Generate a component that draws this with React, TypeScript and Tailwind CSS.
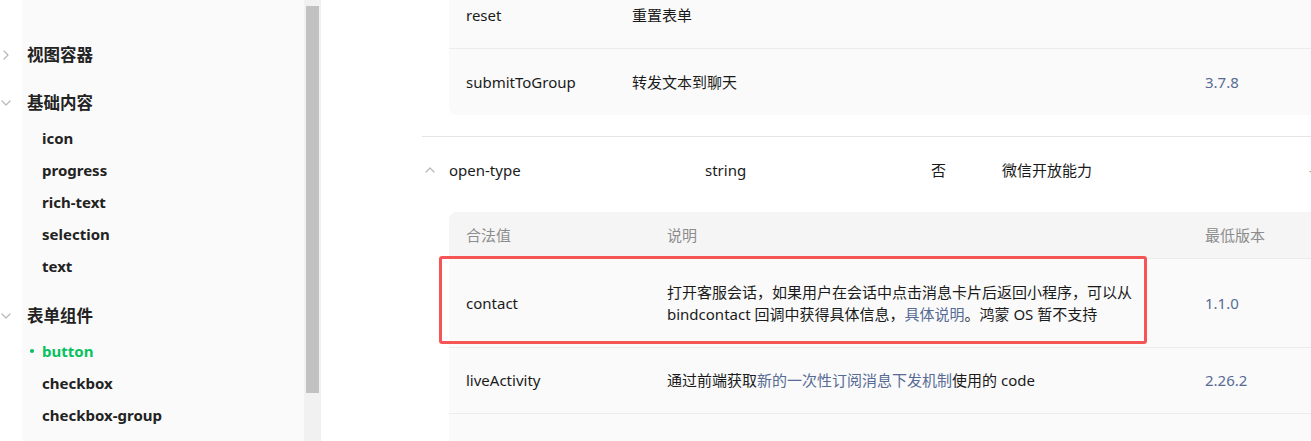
import type { ReactNode } from "react";

const FONT = { fontFamily: '"Noto Sans", "Noto Sans CJK SC", sans-serif' };

function Chevron({ dir }: { dir: "right" | "down" | "up" }) {
  const d =
    dir === "right" ? "M3 1l4 4-4 4" : dir === "down" ? "M1 3l4 4 4-4" : "M1 7l4-4 4 4";
  return (
    <svg width="10" height="10" viewBox="0 0 10 10" fill="none">
      <path d={d} stroke="#b8b8b8" strokeWidth="1.2" strokeLinecap="round" strokeLinejoin="round" />
    </svg>
  );
}

function Group({ title, open, children }: { title: string; open: boolean; children?: ReactNode }) {
  return (
    <div>
      <div className="flex h-[48px] items-center">
        <div className="flex w-[27px] items-center pl-[1px]">
          <Chevron dir={open ? "down" : "right"} />
        </div>
        <span className="text-[16.5px] font-bold text-[#222]">{title}</span>
      </div>
      {open && <div className="mt-[-5px] mb-[10px]">{children}</div>}
    </div>
  );
}

function Item({ label, active }: { label: string; active?: boolean }) {
  return (
    <div className="relative flex h-8 items-center pl-[42px]">
      {active && <span className="absolute left-[30px] h-[4px] w-[4px] rounded-full bg-[#07c160]" />}
      <span className={`text-[15px] font-bold ${active ? "text-[#07c160]" : "text-[#222]"}`}>{label}</span>
    </div>
  );
}

function Link({ children }: { children: ReactNode }) {
  return <span className="text-[#576b95]">{children}</span>;
}

export default function App() {
  return (
    <div className="flex h-[441px] w-[1311px] overflow-hidden bg-white" style={FONT}>
      {/* sidebar */}
      <aside className="w-[304px] shrink-0 bg-[linear-gradient(to_right,#ffffff_22px,#fafafa_22px)] pt-[31px]">
        <Group title="视图容器" open={false} />
        <Group title="基础内容" open>
          <Item label="icon" />
          <Item label="progress" />
          <Item label="rich-text" />
          <Item label="selection" />
          <Item label="text" />
        </Group>
        <Group title="表单组件" open>
          <Item label="button" active />
          <Item label="checkbox" />
          <Item label="checkbox-group" />
        </Group>
      </aside>

      {/* scrollbar */}
      <div className="w-[17px] shrink-0 bg-[#f1f1f1] px-[2px] pt-[6px]">
        <div className="h-[387px] bg-[#c1c1c1]" />
      </div>

      {/* content */}
      <main className="min-w-0 flex-1 overflow-hidden pl-[101px] text-[15px] text-[#1a1a1a]">
        {/* previous attribute's value table */}
        <div className="ml-[27px] mt-[-17px] w-[900px] rounded-b-lg bg-[#fafafa]">
          <div className="flex h-[66px] items-center border-b border-[#ececec] pl-[17px]">
            <span className="w-[166px]">reset</span>
            <span>重置表单</span>
          </div>
          <div className="flex h-[66px] items-center pl-[17px]">
            <span className="w-[166px]">submitToGroup</span>
            <span className="w-[573px]">转发文本到聊天</span>
            <span className="text-[#576b95]">3.7.8</span>
          </div>
        </div>

        {/* open-type attribute */}
        <div className="mt-[21px] w-[1000px] border-t border-[#e5e5e5]">
          <div className="flex h-[66px] items-center">
            <div className="flex w-[27px] items-center pl-[3px]">
              <Chevron dir="up" />
            </div>
            <span className="w-[256px]">open-type</span>
            <span className="w-[226px]">string</span>
            <span className="w-[71px]">否</span>
            <span className="w-[307px]">微信开放能力</span>
            <span className="text-[#999]">-</span>
          </div>
        </div>

        <div className="ml-[27px] mt-[9px] w-[900px] rounded-t-lg bg-[#fafafa]">
          <div className="flex h-[47px] items-center rounded-t-lg border-b border-[#ececec] bg-[#f5f5f5] pl-[17px] text-[#8c8c8c]">
            <span className="w-[201px]">合法值</span>
            <span className="w-[538px]">说明</span>
            <span>最低版本</span>
          </div>

          <div className="relative flex h-[89px] items-center border-b border-[#ececec] pl-[17px]">
            <div className="pointer-events-none absolute left-[-10px] top-[-3px] h-[88px] w-[708px] rounded-[3px] border-[3px] border-[#f55555]" />
            <span className="w-[201px]">contact</span>
            <div className="w-[538px]">
              <p className="w-[468px] leading-[22px]">
                打开客服会话，如果用户在会话中点击消息卡片后返回小程序，可以从 bindcontact 回调中获得具体信息，<Link>具体说明</Link>。鸿蒙 OS 暂不支持
              </p>
            </div>
            <span className="text-[#576b95]">1.1.0</span>
          </div>

          <div className="flex h-[66px] items-center border-b border-[#ececec] pl-[17px]">
            <span className="w-[201px]">liveActivity</span>
            <span className="w-[538px]">
              通过前端获取<Link>新的一次性订阅消息下发机制</Link>使用的 code
            </span>
            <span className="text-[#576b95]">2.26.2</span>
          </div>

          <div className="h-[40px]" />
        </div>
      </main>
    </div>
  );
}
